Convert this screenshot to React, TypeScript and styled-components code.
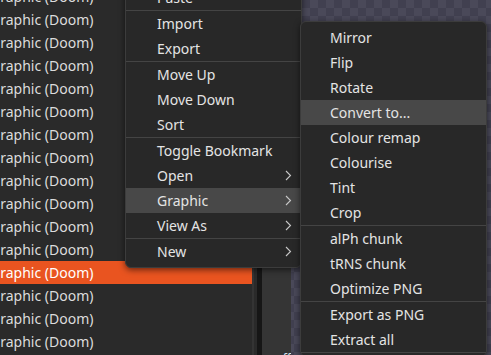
import styled, { createGlobalStyle } from "styled-components";

const GlobalStyle = createGlobalStyle`
  html, body {
    margin: 0;
    padding: 0;
    background: #2a2a2a;
    overflow: hidden;
  }
  body {
    font-family: "Noto Sans", "Open Sans", sans-serif;
  }
`;

const listItems = Array.from({ length: 16 }, (_, i) => i);
const SELECTED = 12;

type Entry = { label?: string; sub?: boolean; active?: boolean; sep?: boolean };

const entryMenu: Entry[] = [
  { label: "Paste" },
  { sep: true },
  { label: "Import" },
  { label: "Export" },
  { sep: true },
  { label: "Move Up" },
  { label: "Move Down" },
  { label: "Sort" },
  { sep: true },
  { label: "Toggle Bookmark" },
  { label: "Open", sub: true },
  { label: "Graphic", sub: true, active: true },
  { label: "View As", sub: true },
  { sep: true },
  { label: "New", sub: true },
];

const graphicMenu: Entry[] = [
  { label: "Mirror" },
  { label: "Flip" },
  { label: "Rotate" },
  { label: "Convert to...", active: true },
  { label: "Colour remap" },
  { label: "Colourise" },
  { label: "Tint" },
  { label: "Crop" },
  { sep: true },
  { label: "alPh chunk" },
  { label: "tRNS chunk" },
  { label: "Optimize PNG" },
  { sep: true },
  { label: "Export as PNG" },
  { label: "Extract all" },
  { sep: true },
];

const Screen = styled.div`
  position: relative;
  display: flex;
  width: 491px;
  height: 355px;
  overflow: hidden;
  background: #2a2a2a;
`;

const EntryList = styled.div`
  display: flex;
  flex-direction: column;
  width: 252px;
  margin-top: -15px;
  background: #2a2a2a;
  flex-shrink: 0;
`;

const ListRow = styled.div<{ $selected?: boolean }>`
  height: 23px;
  display: flex;
  align-items: center;
  flex-shrink: 0;
  font-size: 14px;
  white-space: nowrap;
  overflow: hidden;
  color: ${(p) => (p.$selected ? "#ffffff" : "#dcdcdc")};
  background: ${(p) => (p.$selected ? "#e95420" : "transparent")};
`;

const RowText = styled.span`
  margin-left: -10px;
`;

const ListEdge = styled.div`
  width: 2px;
  background: #343434;
  flex-shrink: 0;
`;

const Gap = styled.div`
  width: 3px;
  background: #2a2a2a;
  flex-shrink: 0;
`;

const Splitter = styled.div`
  width: 5px;
  background: #161616;
  flex-shrink: 0;
`;

const SidePanel = styled.div`
  width: 29px;
  background: #353535;
  flex-shrink: 0;
  display: flex;
  flex-direction: column;
  justify-content: flex-end;
  align-items: flex-end;
  overflow: hidden;
`;

const PanelLabel = styled.span`
  font-size: 12px;
  color: #d8e4f0;
  margin-bottom: -12px;
`;

const Canvas = styled.div`
  flex: 1;
  background-color: #4a4959;
  background-image: conic-gradient(
    #414050 0deg 90deg,
    #4a4959 90deg 180deg,
    #414050 180deg 270deg,
    #4a4959 270deg 360deg
  );
  background-size: 16px 16px;
  background-position: 3px 0;
`;

const Menu = styled.div<{ $left: number; $top: number; $width: number }>`
  position: absolute;
  left: ${(p) => p.$left}px;
  top: ${(p) => p.$top}px;
  width: ${(p) => p.$width}px;
  background: #282828;
  border: 1px solid #3c3c3c;
  border-radius: 6px;
  padding: 3px 0;
  box-shadow: 0 2px 6px rgba(0, 0, 0, 0.55);
  display: flex;
  flex-direction: column;
`;

const MenuItem = styled.div<{ $active?: boolean; $indent: number }>`
  height: 25px;
  display: flex;
  align-items: center;
  justify-content: space-between;
  padding: 0 9px 0 ${(p) => p.$indent}px;
  font-size: 14px;
  color: #e4e4e4;
  white-space: nowrap;
  background: ${(p) => (p.$active ? "#484848" : "transparent")};
`;

const Separator = styled.div`
  height: 1px;
  background: #444444;
`;

const Chevron = () => (
  <svg width="7" height="11" viewBox="0 0 7 11">
    <path d="M1 1 L5.5 5.5 L1 10" fill="none" stroke="#c8c8c8" strokeWidth="1.1" />
  </svg>
);

const PopupMenu = ({
  items,
  left,
  top,
  width,
  indent,
}: {
  items: Entry[];
  left: number;
  top: number;
  width: number;
  indent: number;
}) => (
  <Menu $left={left} $top={top} $width={width}>
    {items.map((it, i) =>
      it.sep ? (
        <Separator key={i} />
      ) : (
        <MenuItem key={i} $active={it.active} $indent={indent}>
          <span>{it.label}</span>
          {it.sub && <Chevron />}
        </MenuItem>
      )
    )}
  </Menu>
);

export default function App() {
  return (
    <>
      <GlobalStyle />
      <Screen>
        <EntryList>
          {listItems.map((i) => (
            <ListRow key={i} $selected={i === SELECTED}>
              <RowText>Graphic (Doom)</RowText>
            </ListRow>
          ))}
        </EntryList>
        <ListEdge />
        <Gap />
        <Splitter />
        <SidePanel>
          <PanelLabel>ff</PanelLabel>
        </SidePanel>
        <Canvas />
        <PopupMenu items={entryMenu} left={125} top={-19} width={175} indent={31} />
        <PopupMenu items={graphicMenu} left={300} top={21} width={185} indent={29} />
      </Screen>
    </>
  );
}
